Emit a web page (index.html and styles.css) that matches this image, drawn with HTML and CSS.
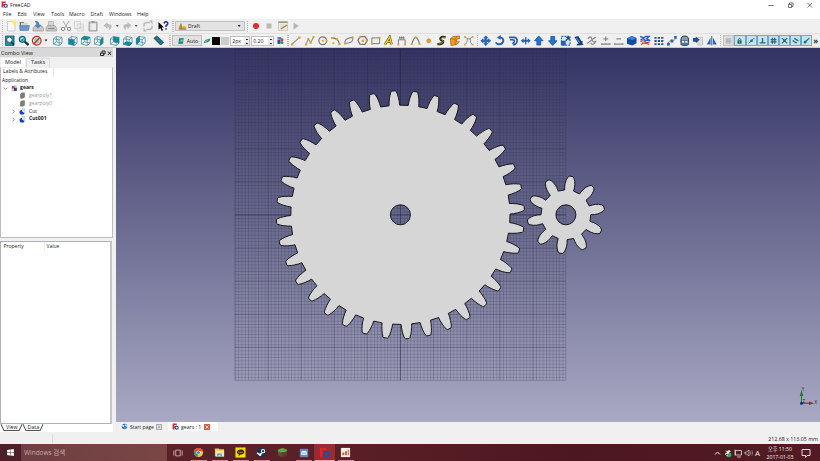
FILE: index.html
```html
<!DOCTYPE html>
<html lang="ko">
<head>
<meta charset="utf-8">
<title>FreeCAD</title>
<link rel="stylesheet" href="styles.css">
</head>
<body>
<svg class="defs" aria-hidden="true">
  <symbol id="logo" viewBox="0 0 12 12"><path d="M1 1h7v2.500H4v2h3v2H4V11H1z" fill="#df2622"/><circle cx="8" cy="8" r="2.600" fill="none" stroke="#1d4eaa" stroke-width="1.800"/><path d="M8 4v1M8 11v1M4 8h1M11 8h1M5.200 5.200l.8.8M10 10l.8.8M10.800 5.200l-.8.8M5.200 10.800l.8-.8" stroke="#1d4eaa" stroke-width="1.300"/></symbol>
  <symbol id="new" viewBox="0 0 12 12"><path d="M2.500 1.500h7.500v9.500h-7.500z" fill="#f8f8f6" stroke="#bdbdb9" stroke-width=".7"/><circle cx="9.500" cy="2.800" r="2.200" fill="#fbed55"/></symbol>
  <symbol id="open" viewBox="0 0 12 12"><path d="M1.500 2h4l1 1H10v3H2z" fill="#777"/><path d="M3 3h7v3H3z" fill="#d9d9d9"/><path d="M1.500 5.500H11.500L10.500 10.500H2z" fill="#6a97c8" stroke="#45719f" stroke-width=".5"/></symbol>
  <symbol id="save" viewBox="0 0 12 12"><path d="M2.500 6h7.500l1.500 2.500v2.500H1V8.500z" fill="#c8c8c8" stroke="#8c8c8c" stroke-width=".6"/><path d="M3 1.500q3-1 4 2v1.500h2L6 8.300 3 5h1.800Q5 3 3 1.500z" fill="#4d86be" stroke="#316698" stroke-width=".4"/></symbol>
  <symbol id="print" viewBox="0 0 12 12"><path d="M3.500 1.500h5V6h-5z" fill="#d7d7d7" stroke="#999" stroke-width=".5"/><path d="M2.500 5.500h7.500L11.500 8v3H1V8z" fill="#c7c7c7" stroke="#929292" stroke-width=".6"/><path d="M3 8.500h6.500" stroke="#888"/></symbol>
  <symbol id="cut" viewBox="0 0 12 12"><path d="M3 1l4.500 7M9 1L4.500 8" stroke="#aaa"/><circle cx="3" cy="9" r="1.700" fill="none" stroke="#888"/><circle cx="9" cy="9" r="1.700" fill="none" stroke="#888"/></symbol>
  <symbol id="copy" viewBox="0 0 12 12"><path d="M1.500 1.500h6v7h-6zM4.500 4h6v7h-6z" fill="#eee" stroke="#ccc" stroke-width=".7"/><path d="M6 6h3.500M6 7.500h3.500M6 9h3.500" stroke="#d2d2d2" stroke-width=".6"/></symbol>
  <symbol id="paste" viewBox="0 0 12 12"><path d="M2 2h8v9H2z" fill="#c7c7c7" stroke="#888" stroke-width=".7"/><path d="M3.500 3.500h5.500v6.500h-5.500z" fill="#ededed"/><path d="M4.500 1h3v2h-3z" fill="#999"/></symbol>
  <symbol id="undo" viewBox="0 0 12 12"><path d="M1.500 5.500L5.500 2v2Q10 4 9.500 7 9 9.500 6.500 10.500 8.500 7 5.500 7v2z" fill="#bcbcbc"/></symbol>
  <symbol id="redo" viewBox="0 0 12 12"><path d="M10.500 5.500L6.500 2v2Q2 4 2.500 7 3 9.500 5.500 10.500 3.500 7 6.500 7v2z" fill="#bcbcbc"/></symbol>
  <symbol id="refresh" viewBox="0 0 12 12"><path d="M2 6.500V4.500Q2.500 2.500 5 2.500h3" fill="none" stroke="#bbb" stroke-width="1.600"/><path d="M7.500 .5h3v4zM4.500 11.500h-3v-4z" fill="#b5b5b5"/><path d="M10 5.500v2Q9.500 9.500 7 9.500H4" fill="none" stroke="#bbb" stroke-width="1.600"/></symbol>
  <symbol id="help" viewBox="0 0 12 12"><path d="M1.500 2v7.500L3.300 8l1.500 3 1.300-.7-1.400-2.800h2.200z" fill="#080808"/><path d="M7 3.500Q7.500 1.500 9.300 1.700 11 2 10.800 3.700 10.500 4.800 9 5.700V7M9 8.300v1.400" fill="none" stroke="#252598" stroke-width="1.500"/></symbol>
  <symbol id="draft" viewBox="0 0 12 12"><path d="M1 9V7l3-5 2 5 2-2 3 3v1z" fill="#dca221"/><path d="M1 9.500h10M4 2v7" stroke="#6b5723"/></symbol>
  <symbol id="rec" viewBox="0 0 12 12"><circle cx="6" cy="6" r="3" fill="#e52a2a"/></symbol>
  <symbol id="stop" viewBox="0 0 12 12"><path d="M3.500 3.500h5v5h-5z" fill="#b9b9b9"/></symbol>
  <symbol id="edit" viewBox="0 0 12 12"><path d="M1.500 1.500h9v9h-9z" fill="#ececdf" stroke="#b7b7aa" stroke-width=".6"/><path d="M1.500 1.500h9v1.500h-9z" fill="#989886"/><path d="M4 9l6-4" stroke="#b67d28" stroke-width="1.500"/><path d="M3 5h4M3 7h3" stroke="#bbb" stroke-width=".5"/></symbol>
  <symbol id="play" viewBox="0 0 12 12"><path d="M3.500 2.500L9 6 3.500 9.500z" fill="#b6b6b6"/></symbol>
  <symbol id="fit" viewBox="0 0 12 12"><path d="M1.500 1h9v10h-9z" fill="#1f8fa5" stroke="#17566a" stroke-width=".8"/><circle cx="5.700" cy="5" r="2.800" fill="#e6ffff" stroke="#143f50" stroke-width=".7"/><path d="M7.700 7.500l2.500 2.500" stroke="#123c4a" stroke-width="1.800"/></symbol>
  <symbol id="sel" viewBox="0 0 12 12"><circle cx="4.500" cy="4.500" r="3" fill="#d9f7fb" stroke="#126b7c" stroke-width="1.500"/><path d="M3 5l3-2v3H3z" fill="#168397"/><path d="M7 7l4 3.500" stroke="#113d50" stroke-width="2.500"/></symbol>
  <symbol id="no" viewBox="0 0 12 12"><path d="M3.500 4l5-1.500.5 6-5 1z" fill="#8fd0b8"/><circle cx="6" cy="6" r="4.500" fill="none" stroke="#b5302a" stroke-width="1.300"/><path d="M3 9l6-6" stroke="#b5302a" stroke-width="1.400"/></symbol>
  <symbol id="cube" viewBox="0 0 12 12"><path d="M1.500 4L4.500 1.500 10.500 2.500v6L7.500 11 1.500 9.500zM1.500 4l6 1 3-2.500M7.500 5v6M4.500 1.500V7L1.500 9.500M4.500 7l6 1.500" fill="#effbfc" stroke="#498e9e" stroke-width=".8"/></symbol>
  <symbol id="front" viewBox="0 0 12 12"><use href="#cube"/><path d="M1.500 4l6 1v6l-6-1.500z" fill="#16869a"/></symbol>
  <symbol id="top" viewBox="0 0 12 12"><use href="#cube"/><path d="M1.500 4l3-2.500 6 1-3 2.500z" fill="#16869a" stroke="#16869a"/></symbol>
  <symbol id="right" viewBox="0 0 12 12"><use href="#cube"/><path d="M7.500 5l3-2.500v6L7.500 11z" fill="#16869a"/></symbol>
  <symbol id="rear" viewBox="0 0 12 12"><use href="#cube"/><path d="M4.500 1.500l6 1v6l-6-1.500z" fill="#16869a"/></symbol>
  <symbol id="bottom" viewBox="0 0 12 12"><use href="#cube"/><path d="M1.500 9.500L4.500 7l6 1.500-3 2.500z" fill="#16869a" stroke="#16869a"/></symbol>
  <symbol id="left" viewBox="0 0 12 12"><use href="#cube"/><path d="M1.500 4l3-2.500V7l-3 2.500z" fill="#16869a" stroke="#16869a"/></symbol>
  <symbol id="ruler" viewBox="0 0 12 12"><path d="M1 3.500L4 1l7 6.500-3 3z" fill="#176b81" stroke="#113647" stroke-width=".8"/><path d="M5 3L4 4M7 5L6 6M9 7L8 8" stroke="#8ed4d9" stroke-width=".6"/></symbol>
  <symbol id="plane" viewBox="0 0 12 12"><path d="M3 2l7-.5-1 8.500-7 .5z" fill="#158b83"/><path d="M4.500 7l3-3M7.500 4v3" stroke="#d5f4eb" stroke-width="1.200"/></symbol>
  <symbol id="constr" viewBox="0 0 12 12"><path d="M1 8l3-4 5-1 2-1-1 4-3 2-5 1z" fill="#208a80"/><path d="M3 7l4-2" stroke="#c4ede5"/></symbol>
  <symbol id="apply" viewBox="0 0 12 12"><path d="M2 1.500h5v3H2z" fill="#347fd0"/><path d="M2 5h4v5.500H2z" fill="#314a91"/><circle cx="8" cy="5" r="2" fill="#d94030"/><circle cx="8" cy="8.500" r="2" fill="#2f9a4e"/></symbol>
  <symbol id="line" viewBox="0 0 12 12"><path d="M2 9.500l8-7" stroke="#888" stroke-width="1.200"/><path d="M1 8.500h2.500V11H1zM8.500 1.500H11V4H8.500z" fill="#e7a01f"/></symbol>
  <symbol id="wire" viewBox="0 0 12 12"><path d="M2 10l2.500-6 2.500 4 3-6" fill="none" stroke="#888" stroke-width="1.100"/><path d="M1 8.500h2.200V11H1zM3.500 3h2v2h-2zM6 7h2v2H6zM9 1h2v2H9z" fill="#e7a01f"/></symbol>
  <symbol id="circle" viewBox="0 0 12 12"><circle cx="6" cy="6" r="4" fill="none" stroke="#777" stroke-width="1.300"/><path d="M5 5h2v2H5zM9 5h2v2H9z" fill="#eaa31e"/></symbol>
  <symbol id="arc" viewBox="0 0 12 12"><path d="M2 3q7 0 8 7" fill="none" stroke="#777" stroke-width="1.200"/><path d="M1 2h2.200v2.200H1zM8.800 8.500H11v2.200H8.800zM2.500 7.500h2v2h-2zM6.500 3.500h2v2h-2z" fill="#e7a01f"/></symbol>
  <symbol id="ellipse" viewBox="0 0 12 12"><path d="M2 7Q3 3 10 2.500 11 6 8 7.500 5 9 2 8.500z" fill="none" stroke="#888" stroke-width="1.200"/><path d="M1 8h2.500v2H1zM9 1.500h2v2H9z" fill="#e7a01f"/></symbol>
  <symbol id="poly" viewBox="0 0 12 12"><path d="M3 2l5-.5 3 4-3 4.500-5-.5-2-4z" fill="none" stroke="#777" stroke-width="1.400"/><path d="M4.800 4.800h2.400v2.400H4.800zM9 5h2v2H9zM2 1.500h1.800v1.800H2z" fill="#e7a01f"/></symbol>
  <symbol id="rect" viewBox="0 0 12 12"><path d="M2 3h8v6H2z" fill="#eee" stroke="#777"/><path d="M1 8h2.200v2.200H1zM8.800 1.800H11V4H8.800z" fill="#e7a01f"/></symbol>
  <symbol id="text" viewBox="0 0 12 12"><path d="M2 10L7 2l2 8M4 7h5" fill="none" stroke="#675b12" stroke-width="2.500"/><path d="M2 10L7 2l2 8M4 7h5" fill="none" stroke="#ead01c" stroke-width="1.300"/></symbol>
  <symbol id="dim" viewBox="0 0 12 12"><path d="M2.500 10V5h7v5M3 3h6M4 1.500V4M6 1.500V4M8 1.500V4" fill="none" stroke="#777"/><path d="M1.500 9h2v2h-2zM8.500 9h2v2h-2z" fill="#e7a01f"/></symbol>
  <symbol id="spline" viewBox="0 0 12 12"><path d="M2 9.500Q4 2.500 6 2.500T10 9.500" fill="none" stroke="#777" stroke-width="1.200"/><path d="M1 8.500h2v2H1zM5 1.500h2v2H5zM9 8.500h2v2H9z" fill="#e7a01f"/></symbol>
  <symbol id="point" viewBox="0 0 12 12"><circle cx="6" cy="6" r="2" fill="#f0a028" stroke="#b66e0c" stroke-width=".6"/></symbol>
  <symbol id="shape" viewBox="0 0 12 12"><path d="M10 2.500Q5 1 4.500 4 5 5.500 7.500 6.500 8 9.500 1.500 9.500" fill="none" stroke="#242414" stroke-width="2.400"/><path d="M9.500 2.500Q5.500 2 5 4 5.500 5 7.500 6.500 7.500 9 2.500 9.300" fill="none" stroke="#c8b526" stroke-width=".7"/></symbol>
  <symbol id="facebind" viewBox="0 0 12 12"><path d="M1.500 4L4 1.500l7-.5v3H8v3h3L8 10l-6 1z" fill="#ed9d20" stroke="#a25c08" stroke-width=".7"/><path d="M1.500 4l5 .5V10.500M6.500 4.500L8 2" fill="none" stroke="#a25c08" stroke-width=".6"/></symbol>
  <symbol id="bezier" viewBox="0 0 12 12"><path d="M2 10Q5 9 4.500 4h3Q7 9 10 10M2 2l3 2M10 2L7 4" fill="none" stroke="#888"/><path d="M1 9h2v2H1zM9 9h2v2H9zM1 1h2v2H1zM9 1h2v2H9z" fill="#e8a450"/></symbol>
  <symbol id="move" viewBox="0 0 12 12"><path d="M6 .8l2.200 2.400H7v1.800h1.800V3.800L11.300 6 8.800 8.200V7H7v1.800h1.200L6 11.200 3.800 8.800H5V7H3.200v1.200L.7 6l2.500-2.200V5H5V3.200H3.800z" fill="#2868c4" stroke="#12387e" stroke-width=".4"/></symbol>
  <symbol id="rotate" viewBox="0 0 12 12"><path d="M6 2.500Q10.500 3 9.500 7 8 10.500 4 9.500 2.500 9 2 7.500" fill="none" stroke="#2460bc" stroke-width="2"/><path d="M7 0v5L3 2.500z" fill="#2460bc"/></symbol>
  <symbol id="offset" viewBox="0 0 12 12"><path d="M2 2.500h5q4 0 3.500 4-.5 3.500-4 4M3 5h3q2 0 1.500 2-.5 1.500-2 2" fill="none" stroke="#285ba6" stroke-width="1.700"/></symbol>
  <symbol id="trimex" viewBox="0 0 12 12"><path d="M.8 6l3-2.500V5h4.400V3.500L11.200 6l-3 2.500V7H3.800v1.500z" fill="#2868c4"/><path d="M6 2v8" stroke="#183a78"/></symbol>
  <symbol id="up" viewBox="0 0 12 12"><path d="M6 1l4.500 5H8v4.500H4V6H1.500z" fill="#2174d8" stroke="#123d88" stroke-width=".7"/></symbol>
  <symbol id="down" viewBox="0 0 12 12"><path d="M6 11l4.500-5H8V1.500H4V6H1.500z" fill="#2174d8" stroke="#123d88" stroke-width=".7"/></symbol>
  <symbol id="scale" viewBox="0 0 12 12"><path d="M1.500 1.500h9v9h-9z" fill="#d6e8ff" stroke="#3268b4" stroke-width="1.200" stroke-dasharray="2 1"/><path d="M1 6h5v5H1z" fill="#2560b5"/><path d="M6 6l3-3M6.500 2.500h3v3" fill="none" stroke="#153d83" stroke-width="1.300"/></symbol>
  <symbol id="editpen" viewBox="0 0 12 12"><path d="M1.500 2l4-1 3 5 2 1-1 1 1.500 2.500-7 .5V9h2L4 6z" fill="#163c83"/><path d="M3.500 3l3.500 5" stroke="#4a7fd0" stroke-width="1.300"/></symbol>
  <symbol id="snipgray" viewBox="0 0 12 12"><path d="M1 9l9-7M2 4q3-4 4 0t4 3q-3 5-5 1" fill="none" stroke="#888" stroke-width="1.300"/></symbol>
  <symbol id="plusgray" viewBox="0 0 12 12"><path d="M1.500 9.500h9M6 1.500v5M3.500 4h5" stroke="#8c8c8c" stroke-width="1.300"/><path d="M1 8.500h2v2H1zM9 8.500h2v2H9zM5 8.500h2v2H5z" fill="#999"/></symbol>
  <symbol id="minusgray" viewBox="0 0 12 12"><path d="M1.500 9.500h9M3.500 4h5" stroke="#8c8c8c" stroke-width="1.300"/><path d="M1 8.500h2v2H1zM9 8.500h2v2H9z" fill="#999"/></symbol>
  <symbol id="bluecube" viewBox="0 0 12 12"><path d="M1 3.500L6 1l5 2v5.500L6.500 11 1 9z" fill="#174b9d"/><path d="M1 3.500L6 1l5 2-4.500 2.500z" fill="#397fd7"/></symbol>
  <symbol id="draftsk" viewBox="0 0 12 12"><path d="M1 1.500l4 1.500 2-1.500h3.500L8 3.500l3 2H6.500L4 3.500 1.500 5.500" fill="none" stroke="#285fd0" stroke-width="1.400"/><path d="M1.500 7q3-2 5 0t4.500 0M2 10q4-3 8.500 0M3 8.500h6" fill="none" stroke="#db3737" stroke-width="1.200"/></symbol>
  <symbol id="array" viewBox="0 0 12 12"><path d="M1.500 2h2.300v2H1.500zM5 2h2.300v2H5zM8.500 2h2.300v2H8.500zM1.500 5.200h2.300v2H1.500zM5 5.200h2.300v2H5zM8.500 5.200h2.300v2H8.500zM1.500 8.500h2.300v2H1.500zM5 8.500h2.300v2H5zM8.500 8.500h2.300v2H8.500z" fill="#244f9e"/></symbol>
  <symbol id="patharray" viewBox="0 0 12 12"><path d="M1.500 10.500q1-5 4.500-4.500t4.500-4" fill="none" stroke="#999"/><path d="M1 8h3v3H1zM4.700 4.700h3v3h-3zM8.500 1h2.700v3H8.500z" fill="#2864bd"/></symbol>
  <symbol id="clone" viewBox="0 0 12 12"><circle cx="6" cy="5" r="4" fill="#8b98a6" stroke="#263e5b" stroke-width="1.100"/><path d="M2 6h8v4l-2 1H4l-2-1z" fill="#4676a9" stroke="#263e5b" stroke-width=".8"/><path d="M3 6h2.500v2H3zM6.500 6H9v2H6.500z" fill="#e9f1fa"/></symbol>
  <symbol id="drawing" viewBox="0 0 12 12"><path d="M6 2.500h5v8H6z" fill="#dedede" stroke="#aaa" stroke-width=".6"/><path d="M1 3h3V1.500L8 5 4 8.500V7H1z" fill="#224d91"/></symbol>
  <symbol id="mirror" viewBox="0 0 12 12"><path d="M4.800 2.500V10H.8zM7.200 2.500V10h4z" fill="#2864bd"/><path d="M6 1v10" stroke="#173664" stroke-width=".8"/></symbol>
  <symbol id="sgrid" viewBox="0 0 12 12"><path d="M2 2.500h8M2 5h8M2 7.500h8M2 10h8M2 2.500V10M4.700 2.500V10M7.300 2.500V10M10 2.500V10" stroke="#999" stroke-width=".8"/></symbol>
  <symbol id="lock" viewBox="0 0 12 12"><path d="M4 5V3.500q2-3 4 0V5" fill="none" stroke="#147765" stroke-width="1.500"/><path d="M2.500 5h7v6h-7z" fill="#147765"/><path d="M6 7v2" stroke="#bfe4df"/></symbol>
  <symbol id="smid" viewBox="0 0 12 12"><path d="M1.500 10.500l9-9" stroke="#147765" stroke-width="1.600"/><circle cx="6" cy="6" r="2.300" fill="#147765"/></symbol>
  <symbol id="sperp" viewBox="0 0 12 12"><path d="M6 1.500v7.500M1 9.500h10" stroke="#147765" stroke-width="2.300"/></symbol>
  <symbol id="shash" viewBox="0 0 12 12"><path d="M4 1v10M8 1v10M1 4h10M1 8h10" stroke="#147765" stroke-width="2"/></symbol>
  <symbol id="scross" viewBox="0 0 12 12"><path d="M1.500 1.500l9 9M10.500 1.500l-9 9" stroke="#147765" stroke-width="2"/><path d="M4 4h4v4H4z" fill="#147765"/></symbol>
  <symbol id="spar" viewBox="0 0 12 12"><path d="M1 5.500L8 10M4 2l7 4.500" stroke="#147765" stroke-width="2.300"/></symbol>
  <symbol id="send" viewBox="0 0 12 12"><path d="M3 9l7.500-7.500" stroke="#147765" stroke-width="2"/><circle cx="3.500" cy="8.500" r="2.300" fill="#147765"/></symbol>
  <symbol id="boolcut" viewBox="0 0 12 12"><path d="M5 1h5v5q-4 0-5-5z" fill="#dce6fb" stroke="#8ba1cf" stroke-width=".6"/><path d="M1 5l4-2q0 5 5 5L8 11H3L1 9z" fill="#123fae"/></symbol>
  <symbol id="box" viewBox="0 0 12 12"><path d="M2 3l3-2h5v8l-3 2H2z" fill="#777"/><path d="M3 4h4v6" fill="none" stroke="#999" stroke-width=".7"/></symbol>
  <symbol id="doc" viewBox="0 0 12 12"><path d="M2 2h7v8H2z" fill="#dde2ed" stroke="#56627e" stroke-width=".7"/><path d="M1.500 2h5v4h-5z" fill="#d9413c"/><path d="M5 5h5v5H5z" fill="#2d458e"/></symbol>
  <symbol id="globe" viewBox="0 0 12 12"><circle cx="6" cy="6" r="4.700" fill="#2874c5"/><path d="M2 3l4 1-1 3-3-1zM7 2l3 2v3L7 5zM5 8l3 0-1 2z" fill="#d7edff"/></symbol>
  <symbol id="close" viewBox="0 0 12 12"><path d="M3 3l6 6M9 3L3 9" stroke="currentColor" stroke-width="1.500"/></symbol>
  <symbol id="win" viewBox="0 0 12 12"><path d="M1.500 2.700L5.500 2v3.700h-4zM6 1.900L10.500 1.200v4.500H6zM1.500 6.200h4V10l-4-.7zM6 6.200h4.500v4.600L6 10z" fill="#fff"/></symbol>
  <symbol id="taskview" viewBox="0 0 12 12"><path d="M3.300 2.500h5.400v7H3.300zM1 3v6M11 3v6" fill="none" stroke="#d4bfc1"/></symbol>
  <symbol id="chrome" viewBox="0 0 12 12"><circle cx="6" cy="6" r="5" fill="#f4c52c"/><path d="M1.700 3.500A5 5 0 0 1 10.800 4.500H6L4 7z" fill="#df4636"/><path d="M1.700 3.500L4.500 7.500 6.200 8 5 11A5 5 0 0 1 1.700 3.500z" fill="#34a056"/><circle cx="6" cy="6" r="2.300" fill="#fff"/><circle cx="6" cy="6" r="1.700" fill="#4184e8"/></symbol>
  <symbol id="folder" viewBox="0 0 12 12"><path d="M1 1.500h4l1 1h5V10H1z" fill="#efc95d"/><path d="M2 4h9v6.500H2z" fill="#fae69a"/><path d="M3.500 7h5v3.500H7V8.500H5v2H3.500z" fill="#3d9cda"/></symbol>
  <symbol id="talk" viewBox="0 0 12 12"><path d="M.5.5h11v11H.5z" fill="#f7df00"/><path d="M6 2.800C10 2.800 10.500 5 10 6.300 9 8.500 6 8.200 6 8.200L4 10V8Q1.500 7 2 5 3 2.800 6 2.800z" fill="#392820"/><path d="M3.500 5.700h5" stroke="#c8b71b" stroke-width=".8"/></symbol>
  <symbol id="steam" viewBox="0 0 12 12"><circle cx="6" cy="6" r="5.200" fill="#183252"/><circle cx="7.700" cy="4.500" r="1.800" fill="none" stroke="#fff" stroke-width="1.200"/><path d="M1 6.500l3.500 2 2-2" fill="none" stroke="#fff" stroke-width="1.500"/><circle cx="4.500" cy="8.500" r="1.300" fill="#fff"/></symbol>
  <symbol id="mine" viewBox="0 0 12 12"><path d="M1 3l5-2 5 2v6l-5 2.500L1 9z" fill="#674b34"/><path d="M1 3l5-2 5 2v1.500L8 6 6 5.500 4 6 1 4.500z" fill="#61a545"/><path d="M6 6v5.500l5-2.500V4.500z" fill="#402e20" opacity=".4"/></symbol>
  <symbol id="discord" viewBox="0 0 12 12"><path d="M1 1h10v10H1z" fill="#6588be"/><path d="M3 4q3-1.500 6 0l.5 4-2 .5H4.500l-2-.5z" fill="#e8f0ff"/><circle cx="4.700" cy="6.200" r=".8" fill="#6588be"/><circle cx="7.300" cy="6.200" r=".8" fill="#6588be"/></symbol>
  <symbol id="rocket" viewBox="0 0 12 12"><path d="M1 1h10v10H1z" fill="#f7eeea"/><path d="M2.500 9V6h2.200v3zM5.500 9V4.500h2V9z" fill="#df5838"/><path d="M9 3v6" stroke="#df5838" stroke-width="1.200"/></symbol>
</svg>

<div class="window">
  <header class="titlebar">
    <svg class="ico s7"><use href="#logo"/></svg><span>FreeCAD</span>
    <svg class="winbtns" viewBox="0 0 50 8"><path d="M.5 4.500h5M20.500 3.500h3v3h-3zM21.500 3V2h3.500v3.500h-1M39.500 2l4.500 4.500M44 2l-4.500 4.500" fill="none" stroke="#333" stroke-width=".7"/></svg>
  </header>
  <nav class="menubar"><span>File</span><span>Edit</span><span>View</span><span>Tools</span><span>Macro</span><span>Draft</span><span>Windows</span><span>Help</span></nav>

  <div class="toolbar first">
    <i class="grip"></i>
    <div class="group"><svg class="i"><use href="#new"/></svg><svg class="i"><use href="#open"/></svg><svg class="i"><use href="#save"/></svg><svg class="i"><use href="#print"/></svg></div>
    <div class="group gap2"><svg class="i"><use href="#cut"/></svg><svg class="i"><use href="#copy"/></svg><svg class="i"><use href="#paste"/></svg></div>
    <div class="group gap2"><svg class="i"><use href="#undo"/></svg><i class="caret"></i><svg class="i"><use href="#redo"/></svg><i class="caret"></i></div>
    <div class="group gap2"><svg class="i"><use href="#refresh"/></svg></div>
    <div class="group gap2"><svg class="i"><use href="#help"/></svg></div>
    <i class="grip far"></i>
    <div class="combo"><svg class="ico s9"><use href="#draft"/></svg><span>Draft</span><i class="caret"></i></div>
    <i class="grip"></i>
    <div class="group"><svg class="i"><use href="#rec"/></svg><svg class="i"><use href="#stop"/></svg><svg class="i"><use href="#edit"/></svg><svg class="i"><use href="#play"/></svg></div>
  </div>

  <div class="toolbar second">
    <i class="grip tight"></i>
    <div class="group"><svg class="i"><use href="#fit"/></svg><svg class="i"><use href="#sel"/></svg><svg class="i"><use href="#no"/></svg><i class="caret dark"></i></div>
    <div class="group gap2"><svg class="i"><use href="#cube"/></svg></div>
    <div class="group gap2"><svg class="i"><use href="#front"/></svg><svg class="i"><use href="#top"/></svg><svg class="i"><use href="#right"/></svg></div>
    <div class="group gap2"><svg class="i"><use href="#rear"/></svg><svg class="i"><use href="#bottom"/></svg><svg class="i"><use href="#left"/></svg></div>
    <div class="group gap3"><svg class="i"><use href="#ruler"/></svg></div>
    <i class="grip far2"></i>
    <div class="auto"><svg class="ico s8"><use href="#plane"/></svg><span>Auto</span></div>
    <svg class="ico s8 constr"><use href="#constr"/></svg>
    <i class="swatch black"></i><i class="swatch grey"></i>
    <div class="spin w2"><span>2px</span><i></i></div>
    <div class="spin w3"><span>0.20</span><i></i></div>
    <svg class="ico s9 applybtn"><use href="#apply"/></svg>
    <i class="grip g4"></i>
    <div class="group"><svg class="i"><use href="#line"/></svg><svg class="i"><use href="#wire"/></svg><svg class="i"><use href="#circle"/></svg><svg class="i"><use href="#arc"/></svg><svg class="i"><use href="#ellipse"/></svg><svg class="i"><use href="#poly"/></svg><svg class="i"><use href="#rect"/></svg><svg class="i"><use href="#text"/></svg><svg class="i"><use href="#dim"/></svg><svg class="i"><use href="#spline"/></svg><svg class="i"><use href="#point"/></svg><svg class="i"><use href="#shape"/></svg><svg class="i"><use href="#facebind"/></svg><svg class="i"><use href="#bezier"/></svg></div>
    <i class="grip g6"></i>
    <div class="group"><svg class="i"><use href="#move"/></svg><svg class="i"><use href="#rotate"/></svg><svg class="i"><use href="#offset"/></svg><svg class="i"><use href="#trimex"/></svg><svg class="i"><use href="#up"/></svg><svg class="i"><use href="#down"/></svg><svg class="i"><use href="#scale"/></svg><svg class="i"><use href="#editpen"/></svg><svg class="i"><use href="#snipgray"/></svg><svg class="i"><use href="#plusgray"/></svg><svg class="i"><use href="#minusgray"/></svg><svg class="i"><use href="#bluecube"/></svg><svg class="i"><use href="#draftsk"/></svg><svg class="i"><use href="#array"/></svg><svg class="i"><use href="#patharray"/></svg><svg class="i"><use href="#clone"/></svg><svg class="i"><use href="#drawing"/></svg><svg class="i"><use href="#mirror"/></svg></div>
    <i class="grip g8"></i>
    <div class="snaps"><svg class="snap off"><use href="#sgrid"/></svg><svg class="snap"><use href="#lock"/></svg><svg class="snap"><use href="#smid"/></svg><svg class="snap"><use href="#sperp"/></svg><svg class="snap"><use href="#shash"/></svg><svg class="snap"><use href="#scross"/></svg><svg class="snap"><use href="#spar"/></svg><svg class="snap"><use href="#send"/></svg></div>
    <span class="more">»</span>
  </div>

  <main class="work">
    <aside class="side">
      <div class="dock-title"><span>Combo View</span><svg viewBox="0 0 14 8"><path d="M1.500 4h3v2.500h-3zM3 4V2h3v3H5M9 2.500l3 3.500M12 2.500L9 6" fill="none" stroke="#222"/></svg></div>
      <div class="side-tabs"><span class="on">Model</span><span>Tasks</span></div>
      <div class="tree">
        <div class="tree-head">Labels &amp; Attributes</div>
        <div class="row app">Application</div>
        <div class="row"><svg class="tw" viewBox="0 0 6 6"><path d="M1 2l2 2 2-2"/></svg><svg class="ico s7"><use href="#doc"/></svg><b>gears</b></div>
        <div class="row child dim"><svg class="ico s7"><use href="#box"/></svg><span>gearpoly1</span></div>
        <div class="row child dim"><svg class="ico s7"><use href="#box"/></svg><span>gearpoly0</span></div>
        <div class="row sub"><svg class="tw" viewBox="0 0 6 6"><path d="M2 1l2 2-2 2"/></svg><svg class="ico s7"><use href="#boolcut"/></svg><span>Cut</span></div>
        <div class="row sub"><svg class="tw" viewBox="0 0 6 6"><path d="M2 1l2 2-2 2"/></svg><svg class="ico s7"><use href="#boolcut"/></svg><b>Cut001</b></div>
      </div>
      <div class="props"><div class="props-head"><span>Property</span><span>Value</span></div></div>
      <div class="prop-tabs"><span>View</span><span>Data</span></div>
    </aside>

    <section class="mdi">
      <svg class="view" viewBox="116 48 704 374">
        <defs>
          <linearGradient id="sky" x1="0" y1="0" x2="0" y2="1"><stop offset="0" stop-color="#333364"/><stop offset="1" stop-color="#a9a9c4"/></linearGradient>
          <pattern id="minor" x="234.900" y="49.300" width="3.310" height="3.310" patternUnits="userSpaceOnUse"><path d="M0 .4H3.310M.4 0V3.310" stroke="#30303f" stroke-opacity=".25" stroke-width=".8"/></pattern>
        </defs>
        <rect x="116" y="48" width="704" height="374" fill="url(#sky)"/>
        <rect x="234.900" y="49.300" width="331" height="331" fill="url(#minor)"/>
        <path id="major" class="major"/>
        <path class="axis" d="M400.400 49.300v331M234.900 214.800h331"/>
        <path id="bigGear" class="gear"/>
        <path id="smallGear" class="gear"/>
        <g class="tripod"><path d="M801.500 403v-9" stroke="#227730"/><path d="M799.700 396l1.800-6 1.800 6z" fill="#1d7d2d"/><path d="M802 403.200h9" stroke="#8a2229"/><path d="M809 401.400l5 1.800-5 1.800z" fill="#a81d24"/><circle cx="801.500" cy="403.200" r="1.500" fill="#202080"/></g>
        <text class="ax" x="801.800" y="391">Y</text><text class="ax" x="814.500" y="404">X</text><text class="ax" x="802.500" y="403">Z</text>
      </svg>
      <div class="doc-tabs">
        <div class="doc-tab"><svg class="ico s7"><use href="#globe"/></svg><span>Start page</span><svg class="x gray"><use href="#close"/></svg></div>
        <div class="doc-tab on"><svg class="ico s7"><use href="#logo"/></svg><span>gears : 1</span><svg class="x red"><use href="#close"/></svg></div>
      </div>
    </section>
  </main>

  <div class="status"><i></i><span>212.68 x 113.05 mm</span></div>

  <footer class="taskbar">
    <div class="start"><svg class="ico s9"><use href="#win"/></svg></div>
    <div class="search">Windows 검색</div>
    <div class="apps">
      <div class="appi"><svg class="ico s10"><use href="#taskview"/></svg></div>
      <div class="appi run"><svg class="ico s11"><use href="#chrome"/></svg></div>
      <div class="appi run"><svg class="ico s11"><use href="#folder"/></svg></div>
      <div class="appi run"><svg class="ico s11"><use href="#talk"/></svg></div>
      <div class="appi run"><svg class="ico s11"><use href="#steam"/></svg></div>
      <div class="appi"><svg class="ico s11"><use href="#mine"/></svg></div>
      <div class="appi run"><svg class="ico s10"><use href="#discord"/></svg></div>
      <div class="appi run active"><svg class="ico s11"><use href="#logo"/></svg></div>
      <div class="appi run"><svg class="ico s11"><use href="#rocket"/></svg></div>
    </div>
    <svg class="tray" viewBox="0 0 46 12"><path d="M2 7.500l2.500-2.500L7 7.500" fill="none" stroke="#eee"/><path d="M12 3l2 1.300L16 3l2 1.300-2 1.200 2 1.300L16 8l-2-1.200L12 8l0-1.500 2-1zM13 8.500l2-1 2 1-2 1.300z" fill="#d9fff0"/><circle cx="16.500" cy="8" r="2" fill="#22b45e"/><path d="M22.500 3.500h6v4.500h-6zM24 10h4M22 2.500v6" fill="none" stroke="#ddd" stroke-width=".8"/><path d="M32 5h1.500L36 3v6l-2.500-2H32z" fill="none" stroke="#ddd" stroke-width=".7"/><path d="M37.300 4.500q1 1.500 0 3M38.800 3.500q1.500 2.500 0 5" fill="none" stroke="#bbb" stroke-width=".6"/></svg>
    <span class="ime">A</span>
    <div class="clock"><span>오후 11:50</span><span>2017-01-03</span></div>
    <svg class="note" viewBox="0 0 12 12"><path d="M2 2.500h8v6H7L5.500 10.500V8.500H2z" fill="none" stroke="#eee" stroke-width=".9"/></svg>
  </footer>
</div>
<script src="gears.js"></script>
</body>
</html>
```
FILE: styles.css
```css
* { box-sizing: border-box; }
body { margin: 0; overflow: hidden; background: #f0f0f0; color: #222; font: 5.5px/8px "Open Sans", "Noto Sans CJK KR", sans-serif; white-space: nowrap; }
.defs { position: absolute; width: 0; height: 0; }
.window { width: 820px; height: 461px; display: flex; flex-direction: column; }
svg { display: block; flex: none; }
.ico { width: 7px; height: 7px; }
.s8 { width: 8px; height: 8px; }
.s9 { width: 9px; height: 9px; }
.s10 { width: 10px; height: 10px; }
.s11 { width: 11px; height: 11px; }

.titlebar { height: 9px; flex: none; background: #fff; display: flex; align-items: center; gap: 2px; padding-left: 1px; font-size: 5.1px; }
.winbtns { width: 50px; height: 8px; margin-left: auto; margin-right: 2px; }
.menubar { height: 10px; flex: none; background: #fff; padding-left: 3px; display: grid; grid-template-columns: 14.5px 15.5px 18px 18px 21.5px 18.5px 28px 20px; line-height: 10px; font-size: 5.3px; }

.toolbar { flex: none; display: flex; align-items: center; background: #f0f0f0; }
.first { height: 14px; }
.second { height: 15px; border-top: 1px solid #e0e0e0; border-bottom: 1px solid #c7c7c7; }
.group { display: flex; align-items: center; }
.gap2 { margin-left: 2px; }
.gap3 { margin-left: 4.5px; }
.i { width: 12px; height: 12px; margin: 0 .625px; }
.second .i { width: 11.5px; height: 11.5px; margin: 0 .88px; }
.grip { flex: none; width: 1.4px; height: 11px; margin: 0 1.5px; background: repeating-linear-gradient(#bbb 0 1px, transparent 1px 2px); }
.grip.tight { margin-right: .5px; }
.grip.far { margin: 0 1.5px 0 2.600px; }
.caret { width: 5.7px; height: 3px; flex: none; background: #555; clip-path: polygon(25% 15%, 75% 15%, 50% 85%); }
.caret.dark { background: #111; }
.combo { width: 70px; height: 10px; display: flex; align-items: center; gap: 1px; padding: 0 2px; border: 1px solid #c1c1c1; background: #e3e3e3; font-size: 5px; }
.combo .caret { margin-left: auto; background: #111; }

.grip.far2 { margin: 0 1px 0 4px; }
.auto { width: 30px; height: 11px; display: flex; align-items: center; gap: 2px; padding-left: 4px; border: 1px solid #bdbdbd; background: #e2e2e2; font-size: 5.2px; }
.constr { margin: 0 1px 0 1.500px; }
.swatch { width: 8px; height: 8px; flex: none; }
.black { background: #000; }
.grey { background: #ccc; margin: 0 1px; }
.spin { height: 10px; display: flex; align-items: center; padding-left: 1px; border: 1px solid #c0c0c0; background: #fff; font-size: 5.2px; }
.spin i { width: 5px; height: 8px; margin-left: auto; background: linear-gradient(#333, #333) 50% 2px/2px 1px no-repeat, linear-gradient(#333, #333) 50% 6px/2px 1px no-repeat, #eee; }
.w2 { width: 20px; }
.w3 { width: 23px; margin-left: 1px; }
.applybtn { margin-left: 2px; }
.grip.g4 { margin: 0 1px 0 2px; }
.grip.g6 { margin: 0 1.500px; }
.grip.g8 { margin: 0 2px; }
.snaps { display: flex; }
.snap { width: 11.1px; height: 11.5px; padding: 1px; border: .8px solid #6ea6ce; background: #c9e0f3; }
.snap.off { border-color: #c3c3c3; background: #ddd; }
.more { margin-left: 1px; font-size: 8px; font-weight: bold; }

.work { height: 385px; flex: none; display: flex; }
.side { width: 116px; flex: none; display: flex; flex-direction: column; }
.dock-title { width: 113px; height: 9px; display: flex; align-items: center; justify-content: space-between; background: #d8d8d8; padding-left: 1px; font-size: 5.5px; }
.dock-title svg { width: 14px; height: 8px; }
.side-tabs { height: 10px; display: flex; line-height: 9px; }
.side-tabs span { width: 24px; margin-top: 1px; text-align: center; border: 1px solid #ddd; border-bottom: 0; line-height: 7px; }
.side-tabs .on { width: 26px; margin-top: 0; background: #fff; line-height: 8px; border-color: #eee; }
.tree { width: 113px; height: 171px; background: #fff; border: 1px solid #b9bcc1; border-top-color: #eee; padding: 0 1px; }
.tree-head { width: 52px; height: 8.5px; padding-left: 1px; line-height: 7.5px; font-size: 5px; border-right: 1px solid #e8e8e8; }
.row { height: 7.75px; display: flex; align-items: center; padding-left: 1px; font-size: 5px; line-height: 7.75px; }
.row.app { padding-left: 0; }
.row b, .row span { margin-left: 2px; }
.row.dim span { margin-left: 3px; }
.tw { width: 5px; height: 5px; margin-right: 3px; fill: none; stroke: #555; stroke-width: .8; }
.row b { font-size: 5.1px; }
.sub { padding-left: 9px; }
.sub span, .sub b { margin-left: 3px; }
.child { padding-left: 17px; }
.dim { color: #999; }
.props { width: 112px; height: 183px; margin-top: 3px; border: 1px solid #aeb2b8; border-right-width: 2px; border-right-color: #c3c6ca; background: #fff; }
.props-head { display: grid; grid-template-columns: 43px 60px; height: 9px; line-height: 9px; padding-left: 2.5px; font-size: 5px; }
.props-head span + span { border-left: 1px solid #eee; margin-left: -3px; padding-left: 2px; }
.prop-tabs { width: 113px; height: 8px; background: #fff; display: flex; padding-left: 4px; gap: 7px; font-size: 5.3px; line-height: 7px; }
.prop-tabs span { position: relative; border-bottom: 1px solid #555; padding: 0 1px 0 2px; height: 7px; }
.prop-tabs span::before, .prop-tabs span::after { content: ""; position: absolute; bottom: -1px; width: 1px; height: 7px; background: #555; }
.prop-tabs span::before { left: -2px; transform: rotate(-25deg); }
.prop-tabs span::after { right: -2px; transform: rotate(25deg); }

.mdi { width: 704px; display: flex; flex-direction: column; }
.view { width: 704px; height: 374px; }
.major { stroke: #28283c; stroke-opacity: .24; stroke-width: .8; }
.axis { stroke: #1b1b35; stroke-opacity: .45; stroke-width: .8; }
.gear { fill: #d6d6d6; fill-rule: evenodd; stroke: #161619; stroke-width: 1; stroke-linejoin: round; }
.ax { font-size: 4.5px; fill: #222; }
.doc-tabs { display: flex; height: 10px; padding-left: 4px; }
.doc-tab { width: 48px; height: 9px; display: flex; align-items: center; gap: 2px; padding-left: 1px; font-size: 5px; }
.doc-tab.on { width: 50px; background: #fff; padding-left: 4px; }
.doc-tab.on span { margin-right: 1px; font-size: 5.2px; }
.x { width: 6px; height: 6px; }
.gray { color: #888; border: .7px solid #aaa; background: #ddd; }
.red { color: #fff; background: #d95a40; }

.status { height: 11px; flex: none; display: flex; align-items: center; justify-content: space-between; padding: 0 2px 0 52px; font-size: 5.3px; }
.status i { width: 1px; height: 9px; background: #ddd; }

.taskbar { height: 17px; flex: none; display: flex; align-items: center; background: linear-gradient(90deg, #592229, #5b2027 40%, #4d171f 70%, #521b23); color: #eee; }
.start { width: 21px; height: 17px; display: flex; align-items: center; justify-content: center; background: #4b2026; }
.search { width: 146px; height: 17px; padding-left: 3px; background: linear-gradient(90deg, #6d3f42, #7a4645); color: #c5a9aa; font-size: 6.5px; line-height: 17px; }
.apps { display: flex; height: 17px; }
.appi { width: 21.05px; height: 17px; display: flex; align-items: center; justify-content: center; }
.run { background: linear-gradient(#dc8a93, #dc8a93) 50% 100%/16px 1px no-repeat; }
.active { background: linear-gradient(#f0a0a6, #f0a0a6) 50% 100%/20px 1px no-repeat, #9a2b31; }
.tray { width: 46px; height: 12px; margin-left: auto; position: relative; left: 4px; }
.ime { width: 9px; font-size: 8px; line-height: 12px; }
.clock { width: 30px; display: flex; flex-direction: column; align-items: center; font-size: 5.2px; margin-left: 1px; }
.note { width: 12px; height: 12px; margin: 0 8px 0 5px; }
```
FILE: gears.js
```js
// Tooth profile: pairs of [radius, half width], from the root to the tip.
function gearPath(cx, cy, teeth, phase, profile, bore) {
  const pts = [];
  for (let k = 0; k < teeth; k++) {
    const a = (phase + k * 360 / teeth) * Math.PI / 180;
    const put = (r, w) => pts.push(
      (cx + r * Math.sin(a) + w * Math.cos(a)).toFixed(2) + ' ' +
      (cy - r * Math.cos(a) + w * Math.sin(a)).toFixed(2));
    profile.forEach(([r, w]) => put(r, -w));
    profile.slice().reverse().forEach(([r, w]) => put(r, w));
  }
  return 'M' + pts.join('L') + 'Z' +
    `M${cx - bore} ${cy}a${bore} ${bore} 0 1 0 ${2 * bore} 0a${bore} ${bore} 0 1 0 ${-2 * bore} 0Z`;
}
document.getElementById('bigGear').setAttribute('d',
  gearPath(400.4, 214.8, 36, -3.15, [[109.5, 5.3], [113, 5.1], [117, 4.5], [120, 3.8], [123.2, 2.7], [124, 1.9]], 10));
document.getElementById('smallGear').setAttribute('d',
  gearPath(565.9, 214.8, 10, 7.6, [[24.5, 4.5], [28, 4.9], [31, 4.9], [34, 4.4], [37, 3.3], [38.8, 1.8]], 10));
let d = '';
for (let i = 0; i <= 10; i++) {
  d += `M${234.9 + i * 33.1} 49.3v331M234.9 ${49.3 + i * 33.1}h331`;
}
document.getElementById('major').setAttribute('d', d);
```
